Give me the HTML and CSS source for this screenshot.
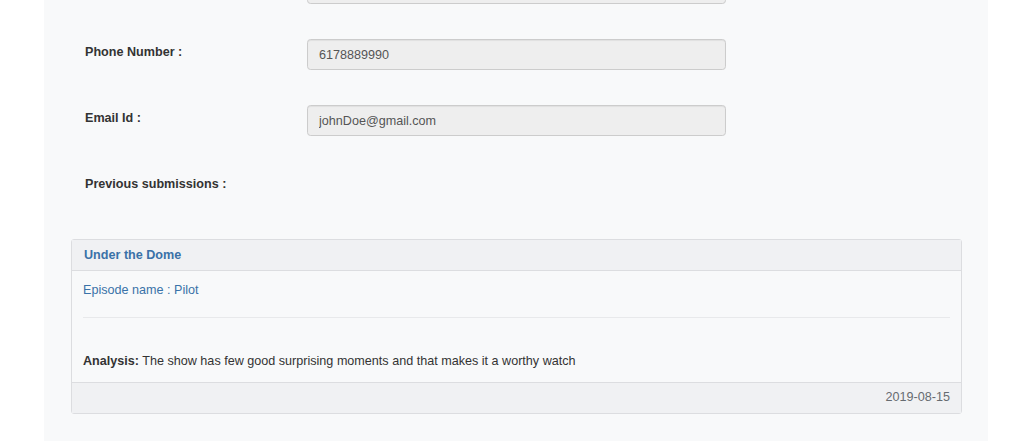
FILE: index.html
```html
<!DOCTYPE html>
<html>
<head>
<meta charset="utf-8">
<link rel="stylesheet" href="styles.css">
</head>
<body>
<div class="page">
  <div class="form-row">
    <div class="label"></div>
    <input class="field" type="text" value="" disabled>
  </div>
  <div class="form-row">
    <div class="label">Phone Number :</div>
    <input class="field" type="text" value="6178889990" disabled>
  </div>
  <div class="form-row">
    <div class="label">Email Id :</div>
    <input class="field" type="text" value="johnDoe@gmail.com" disabled>
  </div>
  <div class="form-row form-row-last">
    <div class="label">Previous submissions :</div>
  </div>
  <div class="panel">
    <div class="panel-heading">Under the Dome</div>
    <div class="panel-body">
      <div class="episode">Episode name : Pilot</div>
      <div class="divider"></div>
      <div class="analysis"><b>Analysis:</b> The show has few good surprising moments and that makes it a worthy watch</div>
    </div>
    <div class="panel-footer">2019-08-15</div>
  </div>
</div>
</body>
</html>
```

FILE: styles.css
```css
html, body {
  margin: 0;
  padding: 0;
  background: #ffffff;
}
body {
  font-family: "Liberation Sans", Arial, Helvetica, sans-serif;
  font-size: 12.6px;
  color: #333333;
}
.page {
  margin-top: -27px;
  margin-left: 44px;
  width: 944px;
  background: #f8f9fa;
  padding: 0 27px 40px 27px;
  box-sizing: border-box;
}
.form-row {
  display: flex;
  align-items: flex-start;
  min-height: 31px;
  margin-bottom: 35px;
}
.form-row-last {
  margin-bottom: 37px;
}
.label {
  width: 236px;
  flex: none;
  padding-left: 14px;
  margin-top: 4px;
  line-height: 18px;
  font-weight: bold;
  color: #333333;
  box-sizing: border-box;
}
.field {
  width: 419px;
  height: 31px;
  box-sizing: border-box;
  margin: 0;
  padding: 0 11px;
  border: 1px solid #cccccc;
  border-radius: 3.6px;
  background: #eeeeee;
  color: #555555;
  font-family: "Liberation Sans", Arial, Helvetica, sans-serif;
  font-size: 12.6px;
  box-shadow: inset 0 1px 1px rgba(0,0,0,0.06);
}
.panel {
  width: 891px;
  box-sizing: border-box;
  border: 1px solid #dcdde0;
  border-radius: 3px;
  background: #f8f9fa;
}
.panel-heading {
  padding: 6px 12px 6px 12px;
  line-height: 18px;
  background: #f0f1f3;
  border-bottom: 1px solid #dcdde0;
  color: #3a72a8;
  font-weight: bold;
}
.panel-body {
  padding: 10px 11px 12px 11px;
}
.episode {
  line-height: 18px;
  color: #3a72a8;
}
.divider {
  margin-top: 18px;
  border-top: 1px solid #e8e9eb;
}
.analysis {
  margin-top: 34px;
  line-height: 18px;
  color: #333333;
}
.panel-footer {
  padding: 5px 11px 7px 11px;
  line-height: 18px;
  background: #f0f1f3;
  border-top: 1px solid #dcdde0;
  text-align: right;
  color: #666b70;
}
```
